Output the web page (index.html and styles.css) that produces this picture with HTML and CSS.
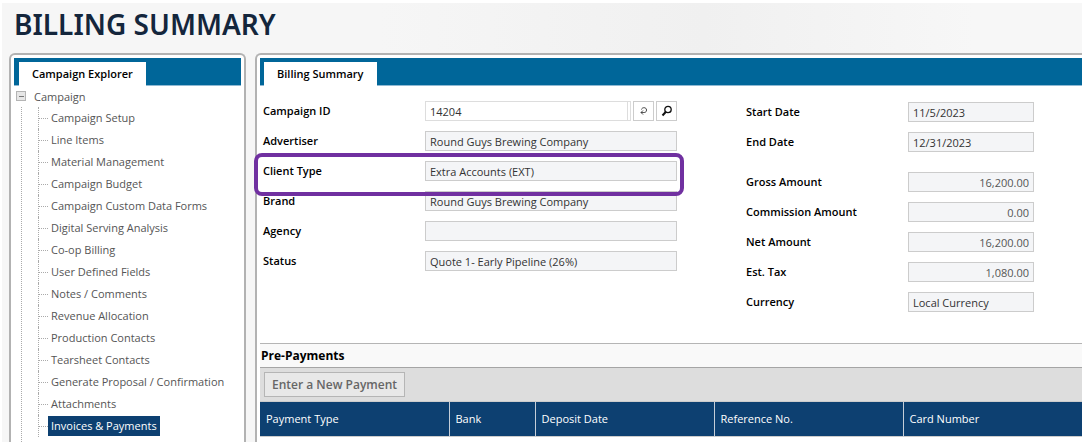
FILE: index.html
```html
<!DOCTYPE html>
<html lang="en">
<head>
<meta charset="utf-8">
<title>Billing Summary</title>
<link rel="stylesheet" href="styles.css">
</head>
<body>
<div class="app">
  <h1 class="title">BILLING SUMMARY</h1>
  <div class="columns">
    <nav class="panel explorer" aria-label="Campaign Explorer">
      <div class="tabbar"><h2 class="tab">Campaign Explorer</h2></div>
      <div class="tree">
        <div class="root">
          <button class="toggle" type="button" aria-label="Collapse Campaign"><svg width="10" height="10" viewBox="0 0 10 10"><rect x=".5" y=".5" width="9" height="9" fill="#e6e6e6" stroke="#b4b4b4"/><path d="M3 5.5h5" stroke="#777"/></svg></button>
          <a href="#">Campaign</a>
        </div>
        <ul class="branch">
          <li><a href="#">Campaign Setup</a></li>
          <li><a href="#">Line Items</a></li>
          <li><a href="#">Material Management</a></li>
          <li><a href="#">Campaign Budget</a></li>
          <li><a href="#">Campaign Custom Data Forms</a></li>
          <li><a href="#">Digital Serving Analysis</a></li>
          <li><a href="#">Co-op Billing</a></li>
          <li><a href="#">User Defined Fields</a></li>
          <li><a href="#">Notes / Comments</a></li>
          <li><a href="#">Revenue Allocation</a></li>
          <li><a href="#">Production Contacts</a></li>
          <li><a href="#">Tearsheet Contacts</a></li>
          <li><a href="#">Generate Proposal / Confirmation</a></li>
          <li><a href="#">Attachments</a></li>
          <li><a href="#" class="selected" aria-current="page">Invoices &amp; Payments</a></li>
        </ul>
      </div>
    </nav>
    <main class="panel summary">
      <div class="tabbar"><h2 class="tab">Billing Summary</h2></div>
      <form class="form">
        <div class="fields">
          <div class="row"><label for="cid">Campaign ID</label>
            <div class="lookup">
              <div class="lookup-box"><input id="cid" class="editable" type="text" value="14204"></div>
              <button type="button" aria-label="Reload"><svg width="10" height="10" viewBox="0 0 10 10" fill="none" stroke="#444"><path d="M2.5 3.5C3 1 7.5 1 7.5 4S5 6.500 2 6.500M4 4.500l-2 2 2 2"/></svg></button>
              <button type="button" aria-label="Search"><svg width="12" height="12" viewBox="0 0 12 12" fill="none" stroke="#111"><circle cx="7" cy="4.500" r="3.200" stroke-width="1.300"/><path d="M4.700 7L1.500 10.500" stroke-width="2"/></svg></button>
            </div>
          </div>
          <div class="row"><label for="adv">Advertiser</label><input id="adv" type="text" readonly value="Round Guys Brewing Company"></div>
          <div class="row marked"><label for="ctype">Client Type</label><input id="ctype" type="text" readonly value="Extra Accounts (EXT)"></div>
          <div class="row"><label for="brand">Brand</label><input id="brand" type="text" readonly value="Round Guys Brewing Company"></div>
          <div class="row"><label for="agency">Agency</label><input id="agency" type="text" readonly value=""></div>
          <div class="row"><label for="status">Status</label><input id="status" type="text" readonly value="Quote 1- Early Pipeline (26%)"></div>
        </div>
        <div class="fields amounts">
          <div class="row"><label for="start">Start Date</label><input id="start" type="text" readonly value="11/5/2023"></div>
          <div class="row spaced"><label for="end">End Date</label><input id="end" type="text" readonly value="12/31/2023"></div>
          <div class="row"><label for="gross">Gross Amount</label><input id="gross" class="number" type="text" readonly value="16,200.00"></div>
          <div class="row"><label for="comm">Commission Amount</label><input id="comm" class="number" type="text" readonly value="0.00"></div>
          <div class="row"><label for="net">Net Amount</label><input id="net" class="number" type="text" readonly value="16,200.00"></div>
          <div class="row"><label for="tax">Est. Tax</label><input id="tax" class="number" type="text" readonly value="1,080.00"></div>
          <div class="row"><label for="cur">Currency</label><input id="cur" type="text" readonly value="Local Currency"></div>
        </div>
      </form>
      <section class="payments">
        <h3>Pre-Payments</h3>
        <div class="toolbar"><button type="button">Enter a New Payment</button></div>
        <table>
          <colgroup><col class="c-type"><col class="c-bank"><col class="c-date"><col class="c-ref"><col></colgroup>
          <thead><tr><th scope="col">Payment Type</th><th scope="col">Bank</th><th scope="col">Deposit Date</th><th scope="col">Reference No.</th><th scope="col">Card Number</th></tr></thead>
        </table>
      </section>
    </main>
  </div>
</div>
</body>
</html>
```
FILE: styles.css
```css
* { box-sizing: border-box; }
body {
  margin: 0;
  height: 100vh;
  padding: 3px 7px 4px 2px;
  background: #fff;
  font: 11px/16px "Open Sans", "Noto Sans", sans-serif;
  color: #333;
  white-space: nowrap;
}
h1, h2, h3, ul { margin: 0; padding: 0; }
button, input { font: inherit; margin: 0; }
button { padding: 0; }
svg { display: block; }

.app {
  display: flex;
  flex-direction: column;
  height: 100%;
  overflow: hidden;
  background: linear-gradient(90deg, #f6f6f6 0, #f6f6f6 35%, #f0f0f0 65%, #f7f7f7 90%);
}
.title {
  padding: 1px 0 9px 12px;
  font-family: "Noto Sans", "Open Sans", sans-serif;
  font-size: 28px;
  line-height: 40px;
  font-weight: 600;
  color: #14263c;
}
.columns {
  flex: 1;
  display: flex;
  gap: 9px;
  min-height: 0;
  padding-left: 7px;
}
.panel {
  display: flex;
  flex-direction: column;
  background: #fff;
  border: 2px solid #b2b2b2;
  border-bottom: 0;
}
.explorer { flex: 0 0 237px; padding: 3px 3px 0; border-radius: 6px 6px 0 0; }
.summary { flex: 1; min-width: 0; padding: 3px 0 0 3px; border-right: 0; border-radius: 6px 0 0 0; }

.tabbar { display: flex; padding: 4px 0 0 5px; background: #069; border-bottom: 1px solid #8fb9d3; }
.summary .tabbar { padding-left: 4px; }
.tab {
  margin-bottom: -1px;
  padding: 0 13px;
  background: #fff;
  font-size: 11px;
  font-weight: 600;
  line-height: 24px;
  color: #000;
}

.tree { flex: 1; display: flex; flex-direction: column; padding-left: 7px; }
.tree a { color: #555; text-decoration: none; }
.root { display: flex; gap: 8px; line-height: 22px; height: 21px; margin-left: -5px; }
.toggle { border: 0; background: none; height: 10px; margin-top: 5px; }
.branch {
  flex: 1;
  margin-left: 0;
  padding-left: 16px;
  border-left: 1px dotted #aaa;
  list-style: none;
}
.branch li { display: flex; align-items: center; height: 22px; border-left: 1px dotted #aaa; }
.branch li::before { content: ""; width: 9px; border-top: 1px dotted #aaa; }
.branch a { padding: 0 3px; line-height: 20px; }
.branch .selected { background: #0d4071; color: #fff; font-weight: 500; }

.form { display: flex; gap: 69px; padding: 10px 48px 26px 3px; }
.fields { flex: 0 0 414px; }
.amounts { flex: 0 1 288px; min-width: 0; padding-top: 1px; }
.row { position: relative; display: flex; align-items: center; height: 30px; }
.spaced { margin-bottom: 10px; }
.row label { flex: 0 0 162px; font-weight: 600; color: #000; }
.row input {
  flex: 1;
  width: 0;
  min-width: 0;
  height: 20px;
  padding: 1px 4px 0;
  border: 1px solid #ccc;
  border-radius: 0;
  background: #f4f5f7;
  color: #333;
}
.row .number { text-align: right; color: #555; }
.lookup { flex: 1; display: flex; gap: 2px; height: 20px; }
.lookup-box { flex: 1; display: flex; padding-right: 2px; border: 1px solid #ddd; border-left: 0; }
.lookup-box .editable { height: 18px; padding-top: 0; border-width: 0 1px; border-color: #ddd; background: #fff; }
.lookup button {
  display: grid;
  place-items: center;
  width: 21px;
  border: 1px solid #ccc;
  background: #fff;
}
.marked { z-index: 1; }
.marked::after {
  content: "";
  position: absolute;
  inset: -3px -7px -10px -9px;
  border: 4px solid #7030a0;
  border-radius: 8px;
  pointer-events: none;
}

.payments { border-top: 1px solid #b5b5b5; }
.payments h3 { padding-left: 1px; background: #f9f9f9; font-size: 12px; line-height: 23px; color: #000; }
.toolbar { padding: 4px; border-top: 1px solid #a5a5a5; border-bottom: 1px solid #ccc; background: #ddd; }
.toolbar button {
  height: 25px;
  padding: 0 7px;
  border: 1px solid #b5b5b5;
  background: #e8e8e8;
  font-size: 12px;
  font-weight: 600;
  color: #666;
}
table { width: 100%; table-layout: fixed; border-collapse: collapse; border-bottom: 1px solid #ccc; }
.c-type { width: 189px; }
.c-bank { width: 86px; }
.c-date { width: 179px; }
.c-ref { width: 189px; }
th {
  height: 34px;
  padding: 0 6px;
  border-left: 1px solid #c5ced8;
  background: #0d4071;
  color: #fff;
  font-weight: 400;
  text-align: left;
}
th:first-child { border-left: 0; }
```
